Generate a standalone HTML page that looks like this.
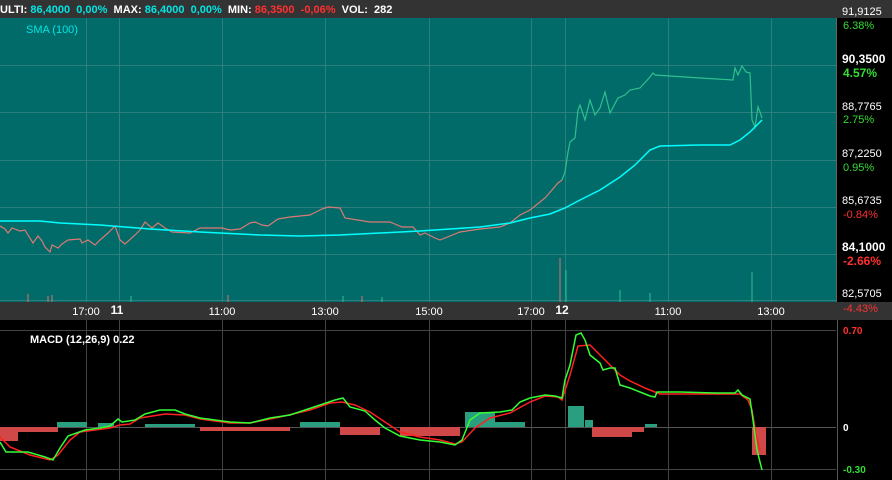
<!DOCTYPE html><html><head><meta charset="utf-8"><style>
body{margin:0;width:892px;height:480px;overflow:hidden;background:#000;font-family:"Liberation Sans",sans-serif}
</style></head><body>
<svg width="892" height="480" xmlns="http://www.w3.org/2000/svg" style="display:block">
<rect x="0" y="0" width="892" height="18" fill="#333"/>
<rect x="0" y="18" width="836" height="284" fill="#006b68"/>
<rect x="836" y="18" width="56" height="284" fill="#000"/>
<rect x="0" y="302" width="892" height="18" fill="#333"/>
<rect x="0" y="320" width="892" height="160" fill="#000"/>
<g stroke="#2c7f7c" stroke-width="1">
<line x1="0" y1="65.5" x2="836" y2="65.5"/><line x1="0" y1="112.5" x2="836" y2="112.5"/><line x1="0" y1="160.5" x2="836" y2="160.5"/><line x1="0" y1="207.5" x2="836" y2="207.5"/><line x1="0" y1="254.5" x2="836" y2="254.5"/><line x1="0" y1="300.5" x2="836" y2="300.5"/>
<line x1="86.5" y1="18" x2="86.5" y2="302"/><line x1="119.5" y1="18" x2="119.5" y2="302"/><line x1="222.5" y1="18" x2="222.5" y2="302"/><line x1="325.5" y1="18" x2="325.5" y2="302"/><line x1="429.5" y1="18" x2="429.5" y2="302"/><line x1="531.5" y1="18" x2="531.5" y2="302"/><line x1="565.5" y1="18" x2="565.5" y2="302"/><line x1="668.5" y1="18" x2="668.5" y2="302"/><line x1="771.5" y1="18" x2="771.5" y2="302"/>
</g>
<line x1="836.5" y1="18" x2="836.5" y2="302" stroke="#666"/>
<g stroke="#444" stroke-width="1">
<line x1="0" y1="330.5" x2="836" y2="330.5"/><line x1="0" y1="469.5" x2="836" y2="469.5"/>
<line x1="86.5" y1="320" x2="86.5" y2="480"/><line x1="119.5" y1="320" x2="119.5" y2="480"/><line x1="222.5" y1="320" x2="222.5" y2="480"/><line x1="325.5" y1="320" x2="325.5" y2="480"/><line x1="429.5" y1="320" x2="429.5" y2="480"/><line x1="531.5" y1="320" x2="531.5" y2="480"/><line x1="565.5" y1="320" x2="565.5" y2="480"/><line x1="668.5" y1="320" x2="668.5" y2="480"/><line x1="771.5" y1="320" x2="771.5" y2="480"/>
</g>
<line x1="0" y1="427.5" x2="836" y2="427.5" stroke="#555"/>
<line x1="837.5" y1="320" x2="837.5" y2="480" stroke="#555"/>
<g stroke="#e07070" stroke-width="1"><line x1="28" y1="302" x2="28" y2="294"/><line x1="48" y1="302" x2="48" y2="296"/><line x1="52" y1="302" x2="52" y2="295"/><line x1="228" y1="302" x2="228" y2="295"/><line x1="362" y1="302" x2="362" y2="296"/><line x1="560" y1="302" x2="560" y2="258"/></g>
<g stroke="#2fbf8f" stroke-width="1"><line x1="131" y1="302" x2="131" y2="296"/><line x1="343" y1="302" x2="343" y2="296"/><line x1="382" y1="302" x2="382" y2="297"/><line x1="566" y1="302" x2="566" y2="270"/><line x1="620" y1="302" x2="620" y2="290"/><line x1="650" y1="302" x2="650" y2="293"/><line x1="752" y1="302" x2="752" y2="272"/></g>
<polyline fill="none" stroke="#d97a74" stroke-width="1.2" points="0,226 5,229 8,233 12,228 20,231 25,230 28,235 33,243 38,236 42,241 45,247 50,252 52,245 58,248 62,244 68,240 80,239 82,243 88,240 95,245 100,240 108,233 115,226 120,240 125,244 135,235 140,230 145,222 152,228 158,223 165,228 172,232 190,233 200,228 212,228 222,228 230,230 240,229 250,223 255,222 262,225 268,226 278,219 290,217 310,215 316,212 322,209 328,207 340,208 345,218 370,222 390,222 402,227 413,227 420,235 425,233 435,238 440,240 460,232 480,229 500,227 510,223 520,215 530,210 540,202 545,198 552,190 558,183 562,180"/>
<polyline fill="none" stroke="#2fbf8f" stroke-width="1.2" points="562,180 565,172 568,152 570,142 575,138 578,110 580,105 585,120 590,100 595,115 600,108 605,92 610,113 618,98 625,95 630,90 640,88 650,77 653,73 655,75 700,78 733,80 735,68 738,75 742,66 746,72 750,73 752,120 755,127 758,107 760,112 762,118"/>
<polyline fill="none" stroke="#00ffff" stroke-width="1.5" points="0,221 20,221 40,221 60,223 100,225 150,229 200,232 260,235 300,236 340,235 380,233 420,231 450,229 480,227 510,223 530,218 550,214 565,208 580,200 600,190 620,177 635,165 650,150 660,146 700,145 730,145 740,140 750,132 762,120"/>
<g fill="#2a9f7f"><rect x="57" y="422" width="30" height="5"/><rect x="98" y="423" width="16" height="4"/><rect x="145" y="424" width="50" height="3"/><rect x="300" y="422" width="40" height="5"/><rect x="465" y="412" width="30" height="15"/><rect x="495" y="422" width="30" height="5"/><rect x="568" y="406" width="16" height="21"/><rect x="585" y="420" width="8" height="7"/><rect x="645" y="424" width="12" height="3"/></g>
<g fill="#d04848"><rect x="0" y="427" width="18" height="14"/><rect x="18" y="427" width="40" height="5"/><rect x="200" y="427" width="90" height="4"/><rect x="340" y="427" width="40" height="8"/><rect x="400" y="427" width="60" height="9"/><rect x="592" y="427" width="40" height="10"/><rect x="632" y="427" width="12" height="5"/><rect x="752" y="427" width="14" height="28"/></g>
<polyline fill="none" stroke="#ff2020" stroke-width="1.5" points="0,437 10,447 30,455 50,460 58,455 70,440 80,432 95,430 110,428 120,425 130,424 140,418 165,414 185,415 200,419 230,423 250,423 280,417 310,410 330,403 342,402 355,405 370,412 385,422 400,432 420,437 440,440 455,444 462,442 475,428 490,418 510,413 530,402 545,396 558,397 562,400 570,375 578,346 590,345 600,355 610,365 620,375 630,381 645,388 655,392 660,394 740,394 748,400 752,410 756,435 760,450"/>
<polyline fill="none" stroke="#33ff33" stroke-width="1.5" points="0,442 6,452 28,452 45,457 53,460 60,448 68,436 85,430 100,428 110,426 118,419 122,422 135,420 145,414 160,410 175,410 185,414 200,418 230,422 250,423 270,418 290,415 305,410 320,405 335,400 343,398 350,407 365,411 375,420 385,428 400,436 420,440 440,442 455,445 462,440 470,420 480,413 500,412 512,410 520,402 530,398 545,395 555,396 562,398 565,380 570,365 576,335 581,333 585,340 590,355 600,363 603,370 610,368 615,368 620,385 630,388 640,392 650,396 655,397 657,392 680,392 715,393 735,393 738,390 742,395 750,399 753,420 757,450 762,470"/>
<g font-size="11" font-weight="bold">
<text x="0" y="13" fill="#fff">ULTI: <tspan fill="#00e5e5">86,4000&#160; 0,00%</tspan>&#160; MAX: <tspan fill="#00e5e5">86,4000&#160; 0,00%</tspan>&#160; MIN: <tspan fill="#ff3030">86,3500&#160; -0,06%</tspan>&#160; VOL:&#160; 282</text>
</g>
<text x="26" y="33" font-size="11" fill="#00e5e5">SMA (100)</text>
<g font-size="11" fill="#fff">
<text x="842" y="15">91,9125</text><text x="842" y="110">88,7765</text><text x="842" y="157">87,2250</text><text x="842" y="204">85,6735</text><text x="842" y="297">82,5705</text>
<text x="842" y="63" font-weight="bold" font-size="12">90,3500</text><text x="842" y="251" font-weight="bold" font-size="12">84,1000</text>
</g>
<g font-size="11" fill="#33dd33"><text x="843" y="29">6.38%</text><text x="843" y="123">2.75%</text><text x="843" y="171">0.95%</text><text x="843" y="77" font-weight="bold" font-size="12">4.57%</text></g>
<g font-size="11" fill="#ff3030"><text x="843" y="218">-0.84%</text><text x="843" y="312">-4.43%</text><text x="843" y="265" font-weight="bold" font-size="12">-2.66%</text></g>
<g font-size="11" fill="#fff" text-anchor="middle"><text x="86" y="315">17:00</text><text x="222" y="315">11:00</text><text x="325" y="315">13:00</text><text x="429" y="315">15:00</text><text x="531" y="315">17:00</text><text x="668" y="315">11:00</text><text x="771" y="315">13:00</text>
<text x="117" y="314" font-weight="bold" font-size="12">11</text><text x="562" y="314" font-weight="bold" font-size="12">12</text></g>
<text x="30" y="343" font-size="11" font-weight="bold" fill="#fff">MACD (12,26,9) 0.22</text>
<text x="843" y="334" font-size="10" fill="#ff3030" font-weight="bold">0.70</text>
<text x="843" y="431" font-size="10" fill="#fff" font-weight="bold">0</text>
<text x="843" y="473" font-size="10" fill="#33dd33" font-weight="bold">-0.30</text>
</svg>
</body></html>
